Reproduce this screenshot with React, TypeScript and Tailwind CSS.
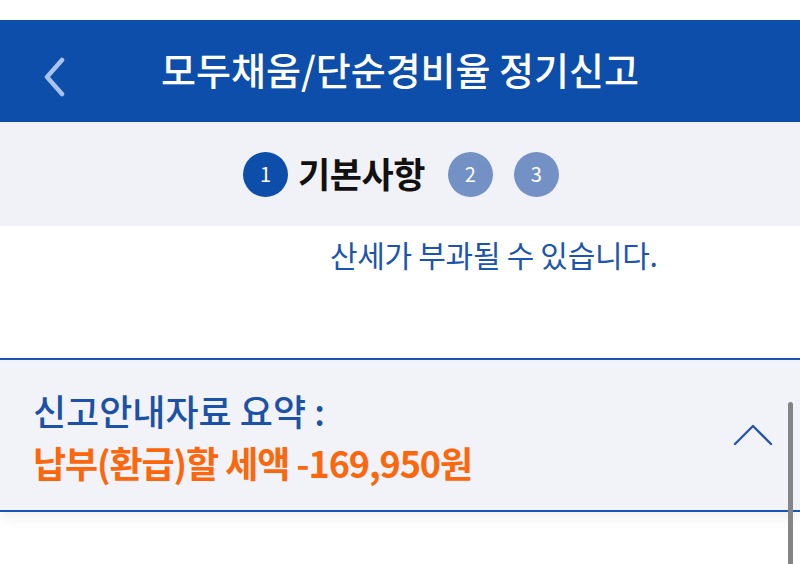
import React from 'react';

const FONT = { fontFamily: '"Noto Sans CJK KR", "Noto Sans", sans-serif' };

const StepDot: React.FC<{ n: number; active?: boolean }> = ({ n, active }) => (
  <div
    className={`w-[45px] h-[45px] rounded-full flex items-center justify-center text-white text-[20px] ${
      active ? 'bg-[#0d4eaa]' : 'bg-[#7391c4]'
    }`}
  >
    {n}
  </div>
);

const App: React.FC = () => {
  return (
    <div className="relative w-[800px] h-[564px] overflow-hidden bg-white" style={FONT}>
      <div className="h-[20px] bg-white" />

      {/* title bar */}
      <header className="h-[102px] bg-[#0d4eaa] flex items-center relative">
        <button className="absolute left-[38px] top-[33px] p-1" aria-label="뒤로">
          <svg width="26" height="40" viewBox="0 0 26 40" fill="none">
            <path d="M20 3 L5 20 L20 37" stroke="#a9c3ee" strokeWidth="4.5" strokeLinecap="round" strokeLinejoin="round" />
          </svg>
        </button>
        <h1 className="w-full text-center text-white text-[38px] font-medium tracking-[0px] leading-none pb-[4px]">
          모두채움/단순경비율 정기신고
        </h1>
      </header>

      {/* steps */}
      <div className="h-[104px] bg-[#f1f2f7] flex items-center justify-center">
        <div className="flex items-center pl-[2px]">
          <StepDot n={1} active />
          <span className="ml-[10px] mr-[23px] text-[35px] font-bold text-[#111] tracking-[-0.5px] leading-none pb-[4px]">
            기본사항
          </span>
          <StepDot n={2} />
          <div className="w-[21px]" />
          <StepDot n={3} />
        </div>
      </div>

      {/* notice tail */}
      <div className="h-[132px] bg-white pl-[330px] pt-[8px]">
        <p className="text-[30px] text-[#1c55ad] tracking-[-0.3px] leading-[40px]">산세가 부과될 수 있습니다.</p>
      </div>

      {/* summary panel */}
      <section className="h-[154px] bg-[#f2f3f8] border-y-2 border-[#1b57b1] shadow-[0_8px_12px_rgba(0,0,0,0.05)] flex items-center justify-between pl-[33px] pr-[26px]">
        <div className="pt-[2px]">
          <p className="text-[36px] font-medium text-[#1c52a5] tracking-[0px] leading-[52px]">신고안내자료 요약 :</p>
          <p className="text-[36px] font-bold text-[#fb670d] tracking-[-1.1px] leading-[52px]">납부(환급)할 세액 -169,950원</p>
        </div>
        <svg width="42" height="26" viewBox="0 0 42 26" fill="none">
          <path d="M3 22 L21 4 L39 22" stroke="#2b56a3" strokeWidth="2.4" strokeLinecap="round" strokeLinejoin="round" />
        </svg>
      </section>

      {/* scroll indicator */}
      <div className="absolute right-[7px] top-[402px] w-[5px] h-[180px] rounded-full bg-[#858585]" />
    </div>
  );
};

export default App;
